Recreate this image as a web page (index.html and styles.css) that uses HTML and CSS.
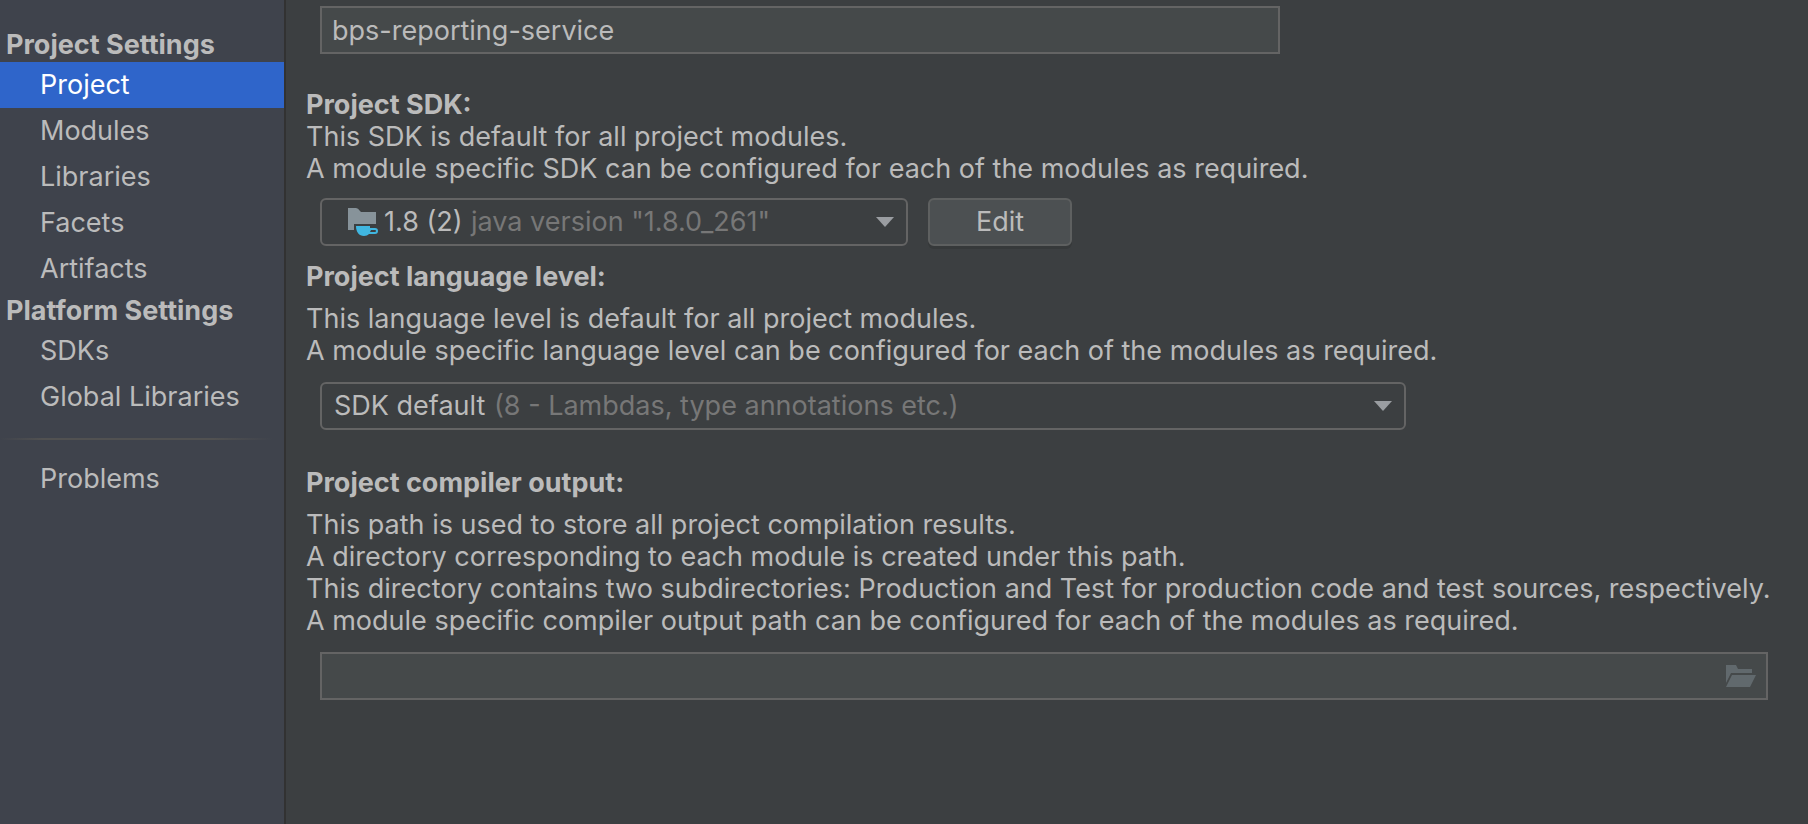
FILE: index.html
```html
<!DOCTYPE html>
<html lang="en">
<head>
    <meta charset="UTF-8">
    <meta name="viewport" content="width=device-width, initial-scale=1.0">
    <title>Project Structure</title>
    <link rel="stylesheet" href="styles.css">
</head>
<body>

    <nav class="sidebar">
        <h2>Project Settings</h2>
        <a href="#project" class="active">Project</a>
        <a href="#modules">Modules</a>
        <a href="#libraries">Libraries</a>
        <a href="#facets">Facets</a>
        <a href="#artifacts">Artifacts</a>
        <h2>Platform Settings</h2>
        <a href="#sdks">SDKs</a>
        <a href="#global-libraries">Global Libraries</a>
        <hr>
        <a href="#problems">Problems</a>
    </nav>

    <main>
        <input type="text" class="field name" aria-label="Project name" value="bps-reporting-service">

        <section class="sdk">
            <h3><label for="sdk">Project SDK:</label></h3>
            <p>This SDK is default for all project modules.<br>
            A module specific SDK can be configured for each of the modules as required.</p>
            <div class="row">
                <div class="combo combo-sdk">
                    <svg class="sdk-icon" width="30" height="28" viewBox="0 0 30 28">
                        <path fill="#87939a" d="M0 0h8q2 0 4 3l1 1h15v12H6v6H0z"/>
                        <path fill="#40b6e0" fill-rule="evenodd" d="M8 18h14v2h5a3 3 0 0 1 0 6h-6c-1 1-3 2-5 2c-5 0-8-4-8-10zM23 22l-1 2h5a1 1 0 0 0 0-2z"/>
                    </svg>
                    <select id="sdk"><option>1.8 (2)</option></select>
                    <span class="hint">java version "1.8.0_261"</span>
                    <svg class="arrow" width="18" height="10" viewBox="0 0 18 10"><path fill="#9a9da1" d="M0 0h18l-9 10z"/></svg>
                </div>
                <button type="button">Edit</button>
            </div>
        </section>

        <section class="level">
            <h3><label for="level">Project language level:</label></h3>
            <p>This language level is default for all project modules.<br>
            A module specific language level can be configured for each of the modules as required.</p>
            <div class="combo combo-level">
                <select id="level"><option>SDK default</option></select>
                <span class="hint">(8 - Lambdas, type annotations etc.)</span>
                <svg class="arrow" width="18" height="10" viewBox="0 0 18 10"><path fill="#9a9da1" d="M0 0h18l-9 10z"/></svg>
            </div>
        </section>

        <section class="output">
            <h3><label for="output">Project compiler output:</label></h3>
            <p>This path is used to store all project compilation results.<br>
            A directory corresponding to each module is created under this path.<br>
            This directory contains two subdirectories: Production and Test for production code and test sources, respectively.<br>
            A module specific compiler output path can be configured for each of the modules as required.</p>
            <div class="field path">
                <input type="text" id="output">
                <button type="button" class="browse" aria-label="Browse">
                    <svg width="30" height="22" viewBox="0 0 30 22">
                        <path fill="#61696d" d="M0 0h10l2 4h14v4H5L0 18z"/>
                        <path fill="#61696d" d="M6 10h24l-6 12H0z"/>
                    </svg>
                </button>
            </div>
        </section>
    </main>

</body>
</html>
```

FILE: styles.css
```css
* {
    box-sizing: border-box;
}
body {
    margin: 0;
    min-height: 100vh;
    display: flex;
    background: #3c3f41;
    color: #bbbbbb;
    font-family: Inter, "Liberation Sans", sans-serif;
    font-size: 27px;
    line-height: 32px;
}
h2, h3, p {
    margin: 0;
    font-size: 27px;
}
input, select, button {
    font: inherit;
    color: inherit;
}

/* Sidebar */
.sidebar {
    flex: none;
    width: 286px;
    padding-top: 26px;
    background: #3f434c;
    border-right: 2px solid #323232;
    display: flex;
    flex-direction: column;
}
.sidebar h2 {
    padding-top: 2px;
    padding-left: 6px;
    line-height: 34px;
    white-space: nowrap;
}
.sidebar a {
    padding-left: 40px;
    line-height: 46px;
    color: inherit;
    text-decoration: none;
}
.sidebar a.active {
    background: #2f65ca;
    color: #ffffff;
}
.sidebar hr {
    width: 100%;
    height: 2px;
    margin: 18px 0 16px;
    border: 0;
    background: linear-gradient(to right, transparent, #515151 15%, #515151 75%, transparent 96%);
}

/* Main panel */
main {
    flex: 1;
    min-width: 0;
    padding: 6px 40px 40px 20px;
}
p {
    white-space: nowrap;
}
.field {
    display: flex;
    align-items: center;
    height: 48px;
    margin-left: 14px;
    padding: 0 10px;
    background: #45494a;
    border: 2px solid #646464;
    border-radius: 0;
}
.name {
    width: 960px;
}
.sdk {
    margin-top: 35px;
}
.level {
    margin-top: 15px;
}
.output {
    margin-top: 37px;
}
.level p, .output p {
    margin-top: 10px;
}
.row {
    display: flex;
    gap: 20px;
    margin-top: 13px;
}
.combo {
    display: flex;
    align-items: center;
    height: 48px;
    margin-left: 14px;
    padding: 0 12px;
    border: 2px solid #646464;
    border-radius: 6px;
    white-space: nowrap;
}
.combo select {
    appearance: none;
    padding: 0;
    border: 0;
    background: none;
}
.combo .hint {
    margin-left: 8px;
    color: #777777;
}
.combo .arrow {
    margin-left: auto;
}
.combo-sdk {
    width: 588px;
    padding-left: 26px;
}
.sdk-icon {
    margin-right: 6px;
}
.combo-level {
    width: 1086px;
    margin-top: 15px;
}
.row button {
    width: 144px;
    height: 48px;
    padding: 0;
    background: #4c5052;
    border: 2px solid #5e6060;
    border-radius: 6px;
    box-shadow: 0 3px 0 #36393a;
}
.path {
    margin-top: 15px;
}
.path input {
    flex: 1;
    min-width: 0;
    padding: 0;
    border: 0;
    background: none;
}
.browse {
    display: flex;
    padding: 0;
    border: 0;
    background: none;
}
```
